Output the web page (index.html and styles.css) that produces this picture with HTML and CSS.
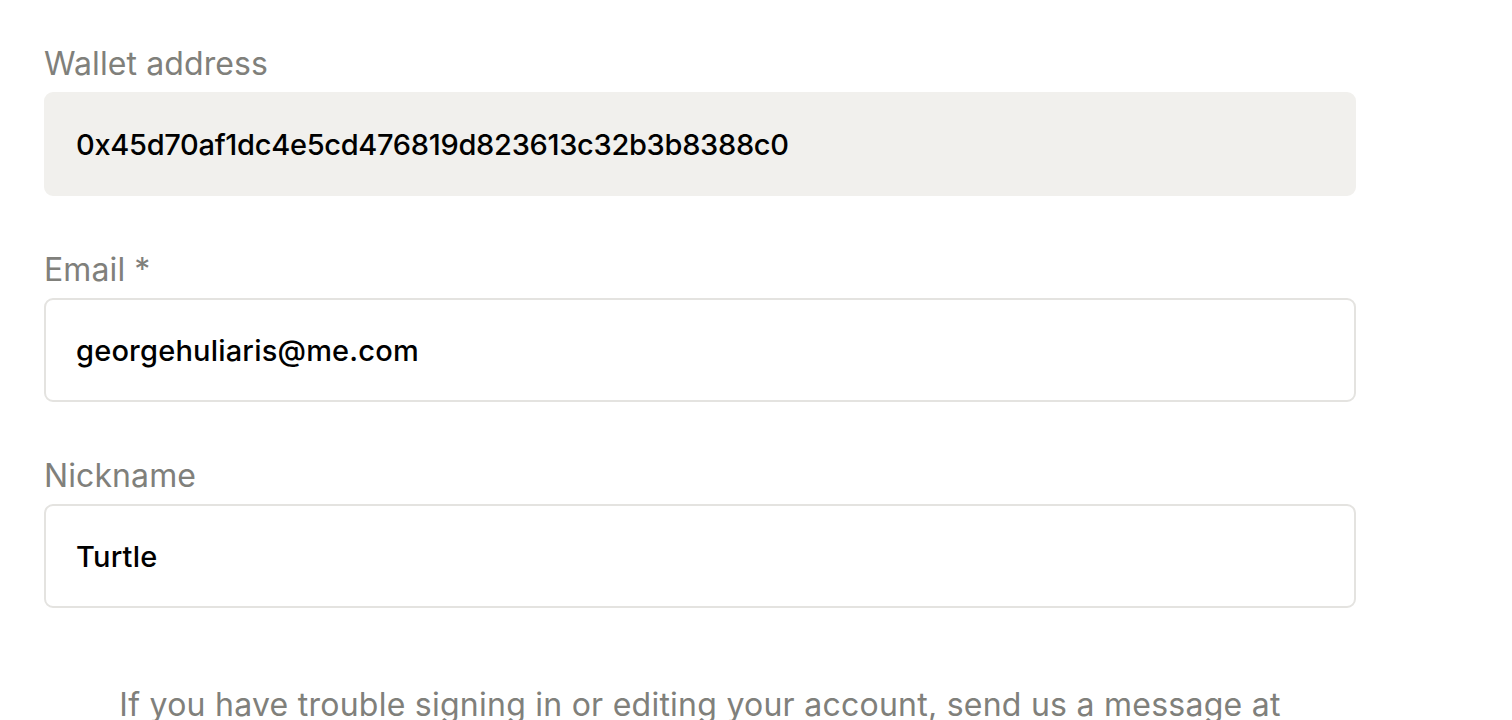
FILE: index.html
```html
<!DOCTYPE html>
<html lang="en">
<head>
<meta charset="utf-8">
<title>Account</title>
<link rel="stylesheet" href="styles.css">
</head>
<body>
<main class="page">
  <form class="form">
    <div class="field">
      <label class="label" for="wallet">Wallet address</label>
      <input class="input input-readonly" id="wallet" type="text" value="0x45d70af1dc4e5cd476819d823613c32b3b8388c0" readonly>
    </div>
    <div class="field">
      <label class="label" for="email">Email *</label>
      <input class="input" id="email" type="email" value="georgehuliaris@me.com">
    </div>
    <div class="field">
      <label class="label" for="nick">Nickname</label>
      <input class="input" id="nick" type="text" value="Turtle">
    </div>
  </form>
  <p class="help">If you have trouble signing in or editing your account, send us a message at</p>
</main>
</body>
</html>
```
FILE: styles.css
```css
* { box-sizing: border-box; }
html, body { margin: 0; padding: 0; background: #ffffff; }
body {
  font-family: Inter, "Liberation Sans", sans-serif;
  overflow: hidden;
}
.page {
  width: 1312px;
  margin-left: 44px;
  padding-top: 44px;
}
.form {
  display: flex;
  flex-direction: column;
  gap: 54px;
}
.field {
  display: flex;
  flex-direction: column;
  gap: 8px;
}
.label {
  font-size: 32px;
  line-height: 40px;
  color: #80807b;
  font-weight: 400;
  letter-spacing: 0.1px;
}
.input {
  height: 104px;
  width: 100%;
  padding: 0 30px;
  border: 2px solid #e4e3e0;
  border-radius: 9px;
  background: #ffffff;
  font-family: Inter, "Liberation Sans", sans-serif;
  font-size: 29px;
  font-weight: 500;
  color: #000000;
  outline: none;
  letter-spacing: 0.2px;
}
.input-readonly {
  background: #f1f0ed;
  border-color: #f1f0ed;
  letter-spacing: -0.3px;
}
.help {
  margin: 77px 0 0;
  text-align: center;
  font-size: 32px;
  line-height: 40px;
  color: #80807b;
  letter-spacing: 0.25px;
}
```
